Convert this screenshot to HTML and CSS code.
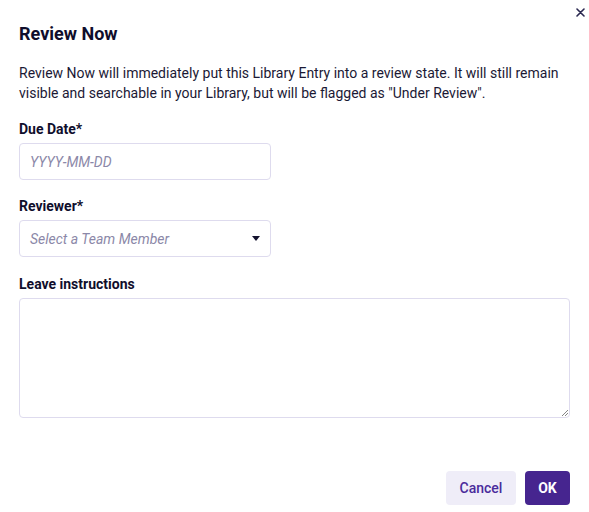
FILE: index.html
```
<!DOCTYPE html>
<html lang="en">
<head>
<meta charset="utf-8">
<link rel="stylesheet" href="styles.css">
</head>
<body>
<div class="modal">
  <button class="close" aria-label="Close">
    <svg width="9" height="9" viewBox="0 0 9 9"><path d="M1 1L8 8M8 1L1 8" stroke="#2a2850" stroke-width="1.6" stroke-linecap="round"/></svg>
  </button>
  <h2 class="title">Review Now</h2>
  <p class="desc">Review Now will immediately put this Library Entry into a review state. It will still remain visible and searchable in your Library, but will be flagged as "Under Review".</p>
  <div class="field">
    <label class="label">Due Date*</label>
    <div class="input short"><span class="placeholder">YYYY-MM-DD</span></div>
  </div>
  <div class="field">
    <label class="label">Reviewer*</label>
    <div class="input short select"><span class="placeholder">Select a Team Member</span>
      <svg class="caret" width="8" height="5" viewBox="0 0 8 5"><path d="M0 0H8L4 5Z" fill="#14122e"/></svg>
    </div>
  </div>
  <div class="field notes">
    <label class="label">Leave instructions</label>
    <div class="textarea">
      <svg class="grip" width="7" height="7" viewBox="0 0 7 7"><path d="M7 1L1 7M7 4L4 7" stroke="#666" stroke-width="0.8"/></svg>
    </div>
  </div>
  <div class="actions">
    <button class="btn cancel">Cancel</button>
    <button class="btn ok">OK</button>
  </div>
</div>
</body>
</html>
```
FILE: styles.css
```
* { box-sizing: border-box; }
html, body { margin: 0; padding: 0; background: #fff; }
body { font-family: Roboto, "Noto Sans", sans-serif; color: #16142f; }
.modal { position: relative; width: 589px; height: 512px; padding: 22px 19px 0 19px; }
.close { position: absolute; top: 8px; right: 4px; width: 9px; height: 9px; padding: 0; border: 0; background: none; display: block; }
.close svg { display: block; }
.title { margin: 0; font-size: 18px; font-weight: 700; line-height: 24px; color: #100e2c; }
.desc { margin: 17px 0 0 0; font-size: 14px; line-height: 20px; color: #1b1935; }
.field { margin-top: 16px; }
.field + .field { margin-top: 16px; }
.field.notes { margin-top: 17px; }
.label { display: block; font-size: 14px; font-weight: 700; line-height: 20px; color: #100e2c; margin-bottom: 4px; }
.input { height: 37px; border: 1px solid #dedbee; border-radius: 4px; display: flex; align-items: center; padding: 0 9px 0 10px; }
.short { width: 252px; }
.placeholder { font-size: 14px; font-style: italic; color: #8b88a8; }
.select { justify-content: space-between; padding-right: 10px; }
.caret { display: block; }
.textarea { position: relative; height: 120px; border: 1px solid #dedbee; border-radius: 4px; }
.grip { position: absolute; right: 1px; bottom: 1px; }
.actions { display: flex; justify-content: flex-end; gap: 9px; margin-top: 53px; }
.btn { height: 34px; border: 0; border-radius: 4px; font-family: Roboto, sans-serif; font-size: 14px; font-weight: 500; padding: 0; }
.cancel { background: #efedf8; color: #4a2b9c; width: 70px; }
.ok { background: #46258f; color: #fff; width: 45px; font-weight: 700; }
```
